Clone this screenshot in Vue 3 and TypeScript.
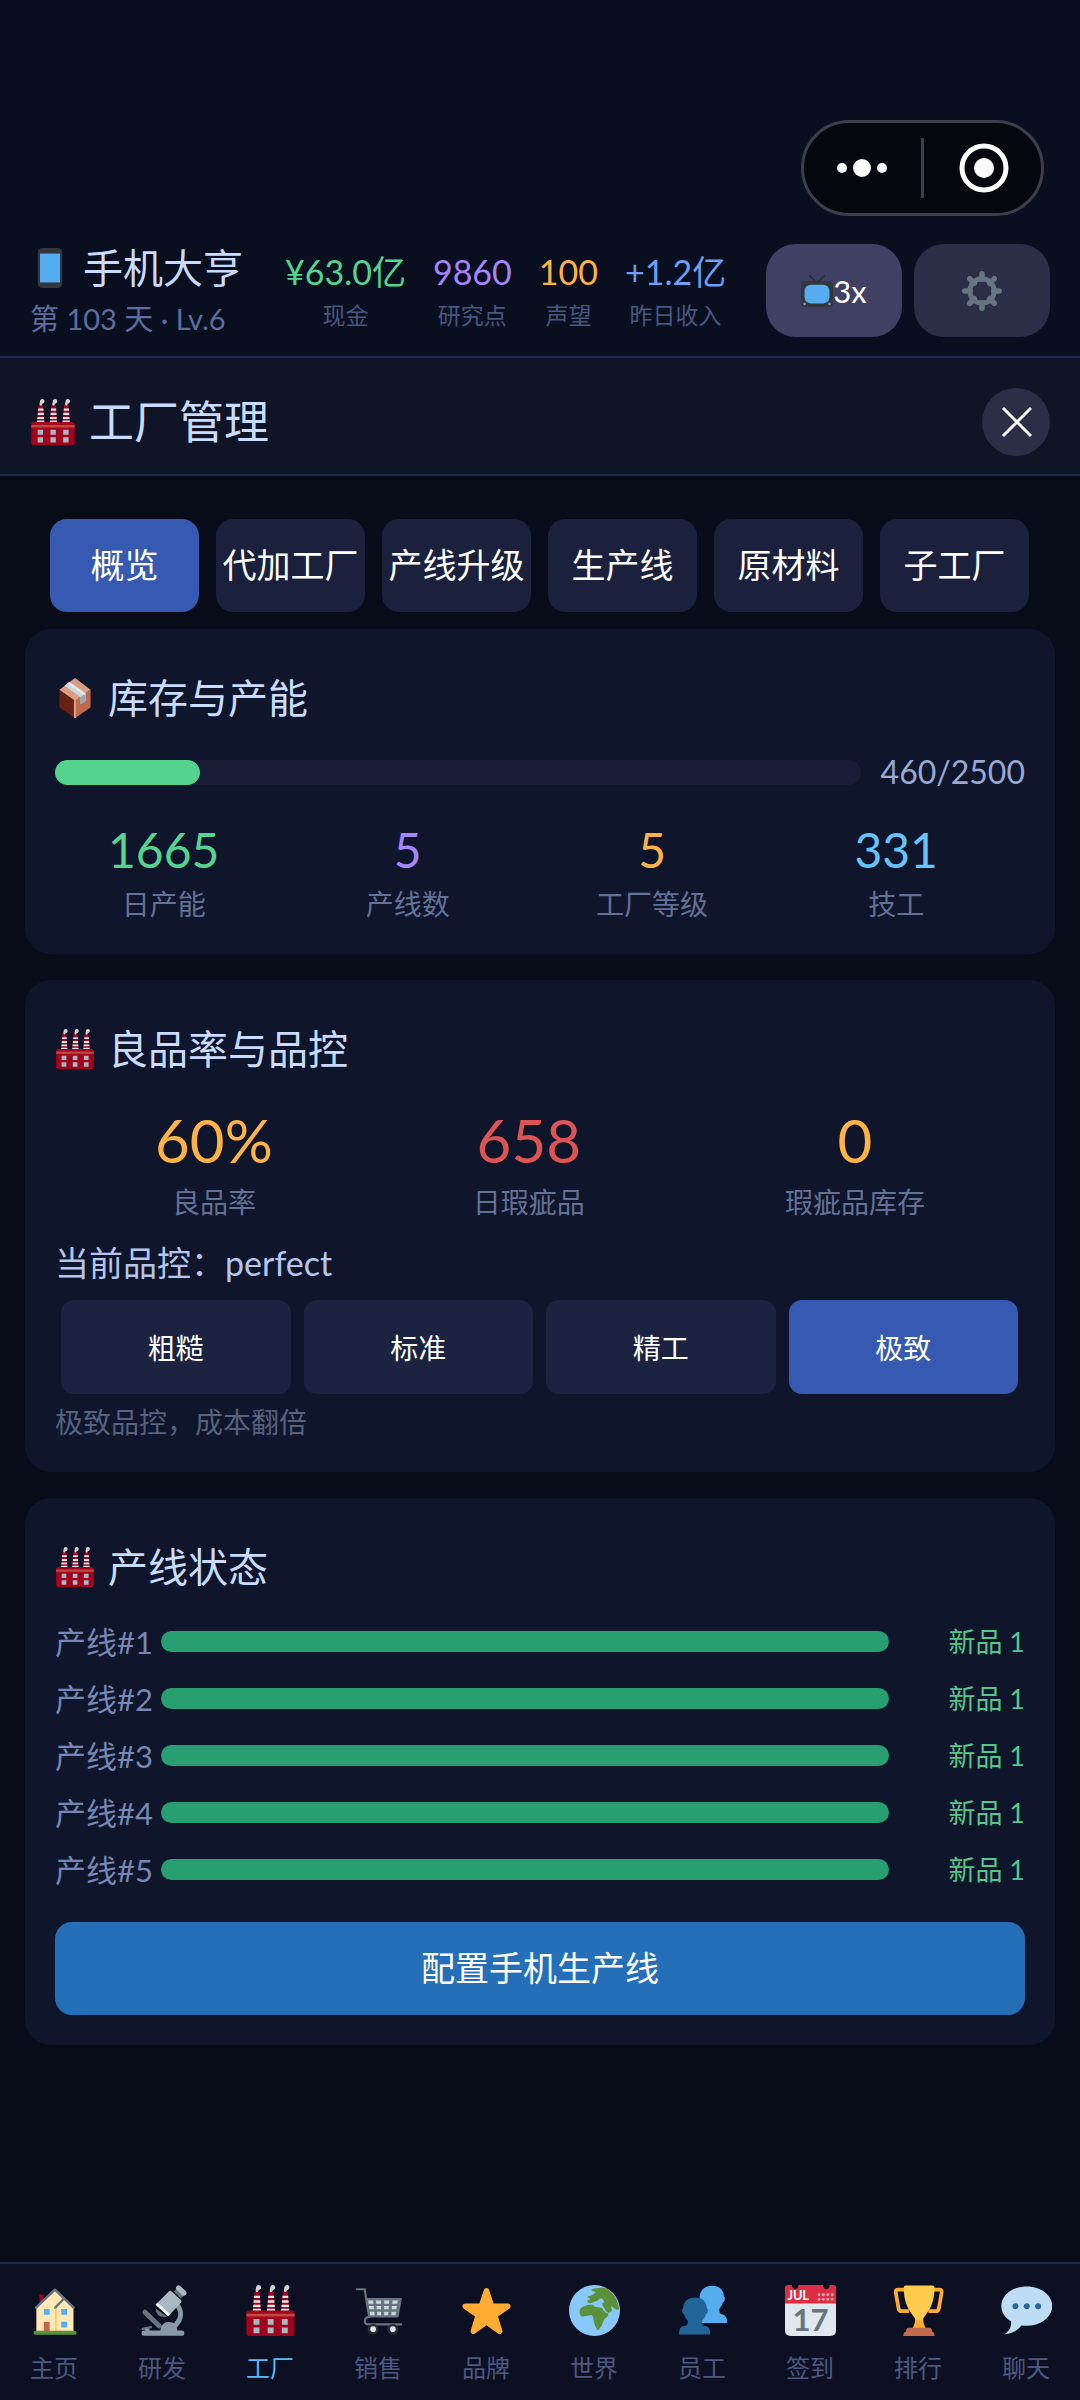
<script setup lang="ts">
import { ref } from 'vue'

interface Stat {
  value: string
  label: string
  tone: string
}

const resources: Stat[] = [
  { value: '¥63.0亿', label: '现金', tone: 'green' },
  { value: '9860', label: '研究点', tone: 'purple' },
  { value: '100', label: '声望', tone: 'orange' },
  { value: '+1.2亿', label: '昨日收入', tone: 'blue' },
]

const tabs = ['概览', '代加工厂', '产线升级', '生产线', '原材料', '子工厂']
const activeTab = ref('概览')

const stock = { used: '460', total: '2500', percent: 18 }

const capacity: Stat[] = [
  { value: '1665', label: '日产能', tone: 'green' },
  { value: '5', label: '产线数', tone: 'purple' },
  { value: '5', label: '工厂等级', tone: 'orange' },
  { value: '331', label: '技工', tone: 'sky' },
]

const quality: Stat[] = [
  { value: '60%', label: '良品率', tone: 'orange' },
  { value: '658', label: '日瑕疵品', tone: 'red' },
  { value: '0', label: '瑕疵品库存', tone: 'orange' },
]

const levels = ['粗糙', '标准', '精工', '极致']
const activeLevel = ref('极致')

const lines = [1, 2, 3, 4, 5].map((id) => ({ id, product: '新品 1', progress: 100 }))

const nav = [
  { icon: 'home', label: '主页' },
  { icon: 'microscope', label: '研发' },
  { icon: 'factory', label: '工厂' },
  { icon: 'cart', label: '销售' },
  { icon: 'star', label: '品牌' },
  { icon: 'globe', label: '世界' },
  { icon: 'people', label: '员工' },
  { icon: 'calendar', label: '签到' },
  { icon: 'trophy', label: '排行' },
  { icon: 'chat', label: '聊天' },
]
const activeNav = ref('工厂')
</script>

<template>
  <svg class="sprite" aria-hidden="true">
    <symbol id="phone" viewBox="0 0 36 36">
      <rect x="7" width="22" height="36" rx="4" fill="#31373d" />
      <path fill="#55acee" d="M9 5h18v26H9z" />
    </symbol>
    <symbol id="tv" viewBox="0 0 36 36">
      <path d="M10 1l8 8 8-8" fill="none" stroke="#292f33" stroke-width="2" stroke-linecap="round" />
      <rect x="0" y="7" width="36" height="29" rx="4" fill="#31373d" />
      <rect x="4" y="11" width="28" height="21" rx="7" fill="#55acee" />
      <circle cx="4" cy="32.500" r="1.500" fill="#8899a6" />
      <circle cx="32" cy="32.500" r="1.500" fill="#8899a6" />
    </symbol>
    <symbol id="gear" viewBox="0 0 36 36">
      <circle cx="18" cy="18" r="11" fill="none" stroke="#66757f" stroke-width="4.400" />
      <path
        d="M18 2.500v5M18 28.500v5M2.500 18h5M28.500 18h5M7 7l4 4M25 25l4 4M29 7l-4 4M11 25l-4 4"
        stroke="#66757f"
        stroke-width="5"
        stroke-linecap="round"
      />
    </symbol>
    <symbol id="box" viewBox="0 0 36 36">
      <path fill="#662113" d="M4 10.500l14 9.500v16L4 26.500z" />
      <path fill="#c1694f" d="M32 10.500L18 20v16l14-9.500z" />
      <path fill="#d99e82" d="M18 0l14 10.500L18 20.500 4 10.500z" />
      <path fill="#d99e82" d="M17 20h2v16h-2z" />
      <path fill="#ccd6dd" d="M13 3.700L27.700 14v6.500L23 23.600V17.200L8.500 7z" />
      <path fill="#99aab5" d="M27.700 14v6.500L23 23.600V17.200z" />
      <path fill="#e1e8ed" d="M13 3.700L27.700 14l-2 1.400L11 5.200z" />
    </symbol>
    <symbol id="factory" viewBox="0 0 36 36">
      <g v-for="x in [0, 10, 20]" :key="x">
        <path :transform="`translate(${x} 0)`" fill="#a0041e" d="M6.700 4.500h3.500L11.200 18.500H5.500z" />
        <path
          :transform="`translate(${x} 0)`"
          fill="#e6e7e8"
          d="M6.500 7.500h4l.1 1.600H6.300zM6.200 10.800h4.500l.1 1.700H6zM5.900 14h5l.1 1.600H5.700zM5.600 16.800h5.500l.1 1.500H5.500z"
        />
        <path
          :transform="`translate(${x} 0)`"
          fill="#d1d3d4"
          d="M7.800 5c-.5-1.200-.4-2 0-2.500C7.600 1.200 8.400 0 9.700 0c1.200 0 1.900 1.200 1.600 2.200-.3 1-1.100 1.500-1.700 1.500L9 5z"
        />
      </g>
      <rect x="1" y="18" width="34" height="18" rx="2" fill="#a0041e" />
      <path fill="#be4b3d" d="M1 20.300h34v2H1z" />
      <path
        fill="#aab8c2"
        d="M6 24h4.200v4H6zM16 24h4.200v4H16zM26 24h4.200v4H26zM6 30h4.200v4H6zM16 30h4.200v4H16zM26 30h4.200v4H26z"
      />
    </symbol>
    <symbol id="home" viewBox="0 0 36 36">
      <path fill="#a0041e" d="M7.300 6.800h3V13h-3z" />
      <path fill="#ffe8b6" d="M5.200 15.500L18.300 3.500l13.100 12v17.200H5.200z" />
      <path fill="#ffcc4d" d="M18.400 16h1.100v17h-1.100z" />
      <path
        fill="none"
        stroke="#66757f"
        stroke-width="1.700"
        stroke-linejoin="round"
        stroke-linecap="round"
        d="M5 16L18.300 3.200 31.500 16M18.500 16l5.400-5.600"
      />
      <path fill="#55acee" d="M10.500 17h4.100v4h-4.100zM22.800 17h4.100v4h-4.100zM22.800 26h4.100v4h-4.100z" />
      <path fill="#c1694f" d="M10.500 26h4.100v6.500h-4.100z" />
      <rect x="3.200" y="32.300" width="30.400" height="2.900" rx="1.400" fill="#5c913b" />
    </symbol>
    <symbol id="microscope" viewBox="0 0 36 36">
      <path fill="none" stroke="#8899a6" stroke-width="3.600" d="M27.500 13c4.500 5 4.500 11-1 16" />
      <path stroke="#66757f" stroke-width="3.500" stroke-linecap="round" d="M5.600 19.200l10 9.600" />
      <path stroke="#66757f" stroke-width="1.600" stroke-linecap="round" d="M4 31l5.800-1.300" />
      <path fill="#8899a6" d="M16.500 33c0-4.500 2.500-6.800 6-6.800s6 2.300 6 6.800z" />
      <path fill="#66757f" d="M13.300 16.500l8 6-2 .2-4-1-2-3z" />
      <path fill="#66757f" d="M26 4.500l2.500-2.500 5 5.200-2.500 2.300z" />
      <path fill="#aab8c2" d="M22.500 4.500q1-1 2 0l6.500 6q1 1 0 2L22 22 13 14z" />
      <path fill="#f5f8fa" d="M14.500 12.500l8.700 8.200L22 22l-8.800-8.300z" />
      <path stroke="#aab8c2" stroke-width="3.800" stroke-linecap="round" d="M29.400 2.200l3.600 3.400" />
      <rect x="3.200" y="32.200" width="30.200" height="3.600" rx="1.600" fill="#8899a6" />
      <path fill="#8899a6" d="M5.800 30.800h3v2h-3z" />
    </symbol>
    <symbol id="cart" viewBox="0 0 36 36">
      <path
        fill="none"
        stroke="#66757f"
        stroke-width="1.500"
        stroke-linecap="round"
        d="M2.700 3h5.500l3.200 19.500C8 22.500 7 27.800 10.500 27.800H34"
      />
      <path fill="#66757f" d="M9.300 9.200h25.200l-2.400 13.700H11.300z" />
      <path
        fill="#ccd6dd"
        d="M10.700 10.900h3.500l.3 2.400H11zM16.200 10.900h3.600v2.400h-3.400zM22 10.900h3.600l-.2 2.400H22zM27.900 10.900h3.800l-.4 2.400h-3.600zM11.200 14.800h3.400l.3 2.400h-3.300zM16.600 14.800h3.200v2.400h-3zM22 14.800h3.300l-.2 2.400H22zM27.500 14.800h3.500l-.4 2.400h-3.300zM11.800 18.900H15l.3 2.400h-3.200zM17 18.900h2.800v2.400h-2.600zM22 18.900h3l-.2 2.400H22zM27.200 18.900h3.200l-.4 2.400h-3z"
      />
      <circle cx="14.200" cy="31.200" r="3.800" fill="#292f33" />
      <circle cx="28.100" cy="31.200" r="3.800" fill="#292f33" />
      <circle cx="14.200" cy="31.200" r="2" fill="#e1e8ed" />
      <circle cx="28.100" cy="31.200" r="2" fill="#e1e8ed" />
    </symbol>
    <symbol id="star" viewBox="0 0 36 36">
      <path
        fill="#ffac33"
        d="M27.287 34.627c-.404 0-.806-.124-1.152-.371L18 28.422l-8.135 5.834c-.343.247-.745.371-1.148.371-.406 0-.814-.126-1.159-.379-.689-.5-.977-1.387-.713-2.197l3.034-9.792-8.062-5.681c-.685-.505-.97-1.393-.708-2.203.264-.808 1.016-1.357 1.866-1.363L12.947 13l3.179-9.549c.268-.809 1.023-1.353 1.874-1.353.851 0 1.606.545 1.875 1.353L23 13l10.036.012c.853.006 1.606.556 1.867 1.363.263.81-.022 1.698-.708 2.203l-8.062 5.681 3.034 9.792c.266.81-.022 1.697-.713 2.197-.347.253-.753.379-1.167.379z"
      />
    </symbol>
    <symbol id="globe" viewBox="0 0 36 36">
      <circle cx="18" cy="18" r="18" fill="#88c9f9" />
      <path
        fill="#5c913b"
        d="M15.500 3.600C17.500 2 21.500 1.600 25.500 2c5 2.500 9 8 9.800 14.500-.6 1.200-1.600 1-2.500.7-1-.6-2-2-3-2.400-.3 1.200 1 2.500.3 3.800-1.100 1.200-2.600 1.200-3.600.2-1.200-1.300-1.500-2.900-2.700-4.200l-.5-1.500 1.600-1c-.3-1.500-1.200-2.300-2.400-2.800-1.200.6-2 1.600-3 2-1.600.4-2.900 1.500-4.500 1.500-1.600 0-2.600-1-2-1.900.5-.6 1.600-.4 2-.9-.4-.8-1.400-.8-1.900-1.300.2-1.400 2.600-.6 3.300-1.800l2.500-1.700c-.8-.8-2.500-.4-3.400-1.600z"
      />
      <path
        fill="#5c913b"
        d="M11.500 14.600c2-.5 3.600-.9 5-.6l2 1.400 4.300.6c1.600 1 1.800 3.300 4.500 4 1 .2.500 1.600-.4 2.400-1.400 1.100-2.500 2.200-2.800 3.500-.5 2.200-1.600 3.700-2.800 5.300-.8.900-1.700.5-2-.6-.7-2-2.100-4-1.900-6.200-.4-1.400-.4-2.500-1.300-3-2.400-.3-4.600 1.300-7.300.6-1.600-.8-1.500-3.300-.9-4.800.9-1.500 2-2.100 3.600-2.600z"
      />
    </symbol>
    <symbol id="people" viewBox="0 0 36 36">
      <path
        fill="#55acee"
        d="M24.800.5c5 0 8.300 3 8.300 7.500 1.200.8.800 3.500-.7 4.300-.6 2-1.400 3.200-2.400 4.200-.5 3 .4 4 2.800 4.500 1.700.5 2.700 2.700 2.600 5.900H16V8C16.500 3.500 20 .5 24.800.5z"
      />
      <path
        fill="#269"
        d="M12.800 8.800c4.800 0 8.200 2.800 8.200 7.500 1.400.8 1 3.800-.6 4.400-.6 2-1.500 3.400-2.700 4.500-.2 2.800.5 3.600 2.500 3.800 2.300.3 3.400 2.500 3.200 6H1.500c-.2-3.500 1-5.700 3.300-6 2-.2 3-1 2.800-3.800-1.200-1.100-2-2.500-2.600-4.500-1.600-.6-2-3.600-.6-4.400 0-4.700 3.500-7.500 8.400-7.500z"
      />
    </symbol>
    <symbol id="calendar" viewBox="0 0 36 36">
      <path fill="#e1e8ed" d="M0 11h36v21q0 4-4 4H4q-4 0-4-4z" />
      <path
        fill="#dd2e44"
        d="M2 0h2.800q.5 3 2.300 3t2.500-3h17.200q.5 3 2.400 3t2.400-3H34q2 0 2 2v11H0V2q0-2 2-2z"
      />
      <g fill="#f4abba">
        <circle v-for="n in 8" :key="n" :cx="24 + ((n - 1) % 4) * 3.100" :cy="n > 4 ? 10.100 : 6.900" r="1" />
      </g>
      <text class="cal-month" x="1.700" y="10.800">JUL</text>
      <text class="cal-day" x="18" y="32.300" text-anchor="middle">17</text>
    </symbol>
    <symbol id="trophy" viewBox="0 0 36 36">
      <path
        fill="none"
        stroke="#ffac33"
        stroke-width="2.600"
        stroke-linejoin="round"
        d="M9 3.200H3.500Q1.700 3.200 1.900 5l2 11.500q.3 2 2.300 2h5M28 3.200h4.800q1.800 0 1.600 1.800l-2 11.500q-.3 2-2.300 2H25"
      />
      <path fill="#ffac33" d="M15.500 22h6c-.5 4 .5 6.500 2 8.800h-10c1.500-2.300 2.500-4.800 2-8.800z" />
      <path fill="#ffcc4d" d="M9 .4h18.900q1.400 0 1.400 1.400C29.300 15 24 19.500 20.800 24.500h-4.700C12.900 19.500 7.600 15 7.600 1.800 7.600.9 8.100.4 9 .4z" />
      <path fill="#c1694f" d="M11 30.200h15q1.500.2 1.500 2.600 1.800.2 1.800 3.200H7.300q0-3 1.900-3.200 0-2.400 1.800-2.600z" />
    </symbol>
    <symbol id="chat" viewBox="0 0 36 36">
      <path
        fill="#bdddf4"
        d="M18.200 1C8.200 1 .2 7.200.2 14.900c0 4.400 2.600 8.300 6.900 10.800.3 3.500-1 6.500-4.600 9.100 5.500-.4 9.300-2.900 11.900-6.300 1.200.2 2.500.3 3.800.3 10 0 18-6.200 18-13.900S28.200 1 18.200 1z"
      />
      <g fill="#2a6797">
        <circle cx="10.200" cy="15" r="2.100" />
        <circle cx="18.200" cy="15" r="2.100" />
        <circle cx="26.200" cy="15" r="2.100" />
      </g>
    </symbol>
  </svg>

  <div class="app">
    <header class="top">
      <div class="capsule">
        <button class="capsule-btn" aria-label="更多">
          <svg viewBox="0 0 60 60" width="60" height="60" fill="#fff">
            <circle cx="9" cy="30" r="5" />
            <circle cx="29" cy="30" r="9" />
            <circle cx="49" cy="30" r="5" />
          </svg>
        </button>
        <span class="capsule-line"></span>
        <button class="capsule-btn" aria-label="关闭小程序">
          <svg viewBox="0 0 60 60" width="60" height="60">
            <circle cx="31" cy="30" r="22" fill="none" stroke="#fff" stroke-width="5" />
            <circle cx="31" cy="30" r="10" fill="#fff" />
          </svg>
        </button>
      </div>
      <div class="status">
        <div class="player">
          <h1 class="name"><svg class="e40"><use href="#phone" /></svg>手机大亨</h1>
          <p class="day">第 103 天 · Lv.6</p>
        </div>
        <div class="resources">
          <div v-for="r in resources" :key="r.label" class="res">
            <span class="res-value" :class="r.tone">{{ r.value }}</span>
            <span class="res-label">{{ r.label }}</span>
          </div>
        </div>
        <div class="actions">
          <button class="action speed"><svg class="e32"><use href="#tv" /></svg>3x</button>
          <button class="action" aria-label="设置"><svg class="e40"><use href="#gear" /></svg></button>
        </div>
      </div>
    </header>

    <div class="page-head">
      <h2 class="page-title"><svg class="e46"><use href="#factory" /></svg>工厂管理</h2>
      <button class="close" aria-label="关闭">
        <svg viewBox="0 0 32 32" width="32" height="32">
          <path d="M3 2l28 28M31 2L3 30" stroke="#fff" stroke-width="3" />
        </svg>
      </button>
    </div>

    <main class="content">
      <div class="tabs">
        <button
          v-for="t in tabs"
          :key="t"
          class="tab"
          :class="{ active: t === activeTab }"
          @click="activeTab = t"
        >
          {{ t }}
        </button>
      </div>

      <section class="card">
        <h3 class="card-title"><svg class="e40"><use href="#box" /></svg>库存与产能</h3>
        <div class="stock">
          <div class="track"><div class="fill" :style="{ width: stock.percent + '%' }"></div></div>
          <span class="stock-text">{{ stock.used }}/{{ stock.total }}</span>
        </div>
        <div class="stats capacity">
          <div v-for="s in capacity" :key="s.label" class="stat">
            <span class="stat-value" :class="s.tone">{{ s.value }}</span>
            <span class="stat-label">{{ s.label }}</span>
          </div>
        </div>
      </section>

      <section class="card">
        <h3 class="card-title"><svg class="e40"><use href="#factory" /></svg>良品率与品控</h3>
        <div class="stats quality">
          <div v-for="s in quality" :key="s.label" class="stat">
            <span class="stat-value" :class="s.tone">{{ s.value }}</span>
            <span class="stat-label">{{ s.label }}</span>
          </div>
        </div>
        <p class="current">当前品控：perfect</p>
        <div class="levels">
          <button
            v-for="l in levels"
            :key="l"
            class="level"
            :class="{ active: l === activeLevel }"
            @click="activeLevel = l"
          >
            {{ l }}
          </button>
        </div>
        <p class="hint">极致品控，成本翻倍</p>
      </section>

      <section class="card lines-card">
        <h3 class="card-title"><svg class="e40"><use href="#factory" /></svg>产线状态</h3>
        <ul class="lines">
          <li v-for="l in lines" :key="l.id" class="line">
            <span class="line-name">产线#{{ l.id }}</span>
            <div class="line-track"><div class="line-fill" :style="{ width: l.progress + '%' }"></div></div>
            <span class="line-product">{{ l.product }}</span>
          </li>
        </ul>
        <button class="primary">配置手机生产线</button>
      </section>
    </main>

    <nav class="nav">
      <button
        v-for="n in nav"
        :key="n.icon"
        class="nav-item"
        :class="{ selected: n.label === activeNav }"
        @click="activeNav = n.label"
      >
        <svg class="e51"><use :href="'#' + n.icon" /></svg>
        <span>{{ n.label }}</span>
      </button>
    </nav>
  </div>
</template>

<style>
body {
  background: #080c19;
}
</style>

<style scoped>
.sprite {
  display: none;
}
.cal-month,
.cal-day {
  font-family: Lato, sans-serif;
  font-weight: 700;
}
.cal-month {
  font-size: 9px;
  fill: #fff;
}
.cal-day {
  font-size: 22px;
  fill: #66757f;
}
.app {
  display: flex;
  flex-direction: column;
  min-height: 100vh;
  background: #080c19;
  font-family: Lato, 'Noto Sans CJK SC', sans-serif;
  font-weight: 400;
  color: #fff;
}
h1,
h2,
h3,
p,
ul {
  margin: 0;
  padding: 0;
  font-weight: inherit;
}
button {
  padding: 0;
  border: 0;
  font: inherit;
  color: inherit;
  background: none;
  white-space: nowrap;
}
svg {
  display: block;
  flex: none;
}
.e32 {
  width: 32px;
  height: 32px;
}
.e40 {
  width: 40px;
  height: 40px;
}
.e46 {
  width: 46px;
  height: 46px;
}
.e51 {
  width: 51px;
  height: 51px;
}
.green {
  color: #55d490;
}
.purple {
  color: #a485fa;
}
.orange {
  color: #ffb344;
}
.blue {
  color: #6c9ff5;
}
.sky {
  color: #67c3fb;
}
.red {
  color: #de5454;
}

.top {
  padding-top: 120px;
  background: #0a0f20;
  border-bottom: 2px solid #1e2a4c;
}
.capsule {
  display: flex;
  align-items: center;
  box-sizing: border-box;
  width: 243px;
  height: 96px;
  margin: 0 36px 0 auto;
  border: 3px solid #3d3e4a;
  border-radius: 48px;
  background: #05070f;
}
.capsule-btn {
  display: flex;
  flex: 1;
  justify-content: center;
}
.capsule-line {
  width: 3px;
  height: 60px;
  background: #3d3e4a;
}
.status {
  display: flex;
  align-items: center;
  height: 93px;
  padding: 28px 30px 19px;
}
.player {
  width: 255px;
  padding-top: 4px;
}
.name {
  display: flex;
  align-items: center;
  gap: 13px;
  font-size: 40px;
  line-height: 52px;
  color: #c9dcff;
}
.day {
  font-size: 29px;
  line-height: 50px;
  color: #5b6e9d;
}
.resources {
  display: flex;
  flex: 1;
  gap: 27px;
  padding-top: 5px;
}
.res {
  display: flex;
  flex-direction: column;
  align-items: center;
}
.res-value {
  font-size: 34px;
  line-height: 44px;
}
.res-label {
  font-size: 23px;
  line-height: 42px;
  color: #465780;
}
.actions {
  display: flex;
  gap: 12px;
}
.action {
  display: flex;
  align-items: center;
  justify-content: center;
  width: 136px;
  height: 93px;
  border-radius: 30px;
  background: #2a2e47;
}
.speed {
  background: #403f64;
  font-size: 31px;
}

.page-head {
  display: flex;
  align-items: center;
  justify-content: space-between;
  height: 104px;
  padding: 12px 30px 0;
  background: #0f1427;
  border-bottom: 2px solid #1e2a4c;
}
.page-title {
  display: flex;
  align-items: center;
  gap: 13px;
  font-size: 45px;
  line-height: 64px;
  color: #c9dcff;
}
.close {
  display: flex;
  align-items: center;
  justify-content: center;
  width: 68px;
  height: 68px;
  border-radius: 50%;
  background: #2a2e47;
}

.content {
  display: flex;
  flex: 1;
  flex-direction: column;
  gap: 26px;
  padding: 43px 25px 40px;
}
.tabs {
  display: flex;
  gap: 17px;
  margin: 0 26px -9px 25px;
}
.tab {
  flex: 1 1 0;
  height: 93px;
  padding-bottom: 4px;
  border-radius: 17px;
  background: #1b213d;
  font-size: 34px;
}
.active {
  background: #365ab1;
}
.card {
  padding: 40px 30px 26px;
  border-radius: 26px;
  background: #0f152a;
}
.card-title {
  display: flex;
  align-items: center;
  gap: 13px;
  padding-bottom: 2px;
  font-size: 40px;
  line-height: 58px;
  color: #c9dcff;
}
.stock {
  display: flex;
  align-items: center;
  gap: 20px;
  margin-top: 20px;
}
.track {
  flex: 1;
  height: 25px;
  border-radius: 13px;
  background: #181c36;
}
.fill {
  height: 100%;
  border-radius: 13px;
  background: #53d38e;
}
.stock-text {
  font-size: 32px;
  line-height: 46px;
  color: #9aa9d4;
}
.stats {
  display: flex;
}
.stat {
  display: flex;
  flex-direction: column;
  align-items: center;
}
.stat-label {
  font-size: 28px;
  line-height: 48px;
  color: #647196;
}
.capacity {
  justify-content: space-between;
  margin-top: 25px;
  padding: 0 87px 0 53px;
}
.capacity .stat-value {
  font-size: 48px;
  line-height: 60px;
}
.quality {
  justify-content: space-around;
  margin-top: 26px;
}
.quality .stat {
  gap: 4px;
}
.quality .stat-value {
  font-size: 60px;
  line-height: 68px;
}
.current {
  margin-top: 14px;
  font-size: 34px;
  line-height: 46px;
  color: #b4c6ed;
}
.levels {
  display: flex;
  gap: 13px;
  margin: 14px 7px 4px 6px;
}
.level {
  flex: 1 1 0;
  height: 94px;
  border-radius: 13px;
  background: #1b2340;
  font-size: 28px;
}
.level.active {
  background: #365ab1;
}
.hint {
  font-size: 28px;
  line-height: 48px;
  color: #55617f;
}
.lines-card {
  padding-bottom: 30px;
}
.lines {
  margin: 15px 0 24px;
  list-style: none;
}
.line {
  display: flex;
  align-items: center;
  height: 57px;
}
.line-name {
  width: 106px;
  font-size: 31px;
  line-height: 46px;
  color: #7587b5;
  white-space: nowrap;
}
.line-track {
  flex: 1;
  height: 21px;
}
.line-fill {
  height: 100%;
  border-radius: 11px;
  background: #279f70;
}
.line-product {
  width: 136px;
  font-size: 27px;
  line-height: 46px;
  text-align: right;
  color: #55c78c;
}
.primary {
  width: 100%;
  height: 93px;
  padding-bottom: 4px;
  border-radius: 17px;
  background: #256fb9;
  font-size: 34px;
}

.nav {
  display: flex;
  height: 136px;
  background: #0d1022;
  border-top: 2px solid #1e2a4c;
}
.nav-item {
  display: flex;
  flex: 1 1 0;
  flex-direction: column;
  align-items: center;
  gap: 12px;
  padding-top: 21px;
  font-size: 24px;
  line-height: 40px;
  color: #4b5980;
}
.selected {
  color: #55bdf5;
}
</style>
